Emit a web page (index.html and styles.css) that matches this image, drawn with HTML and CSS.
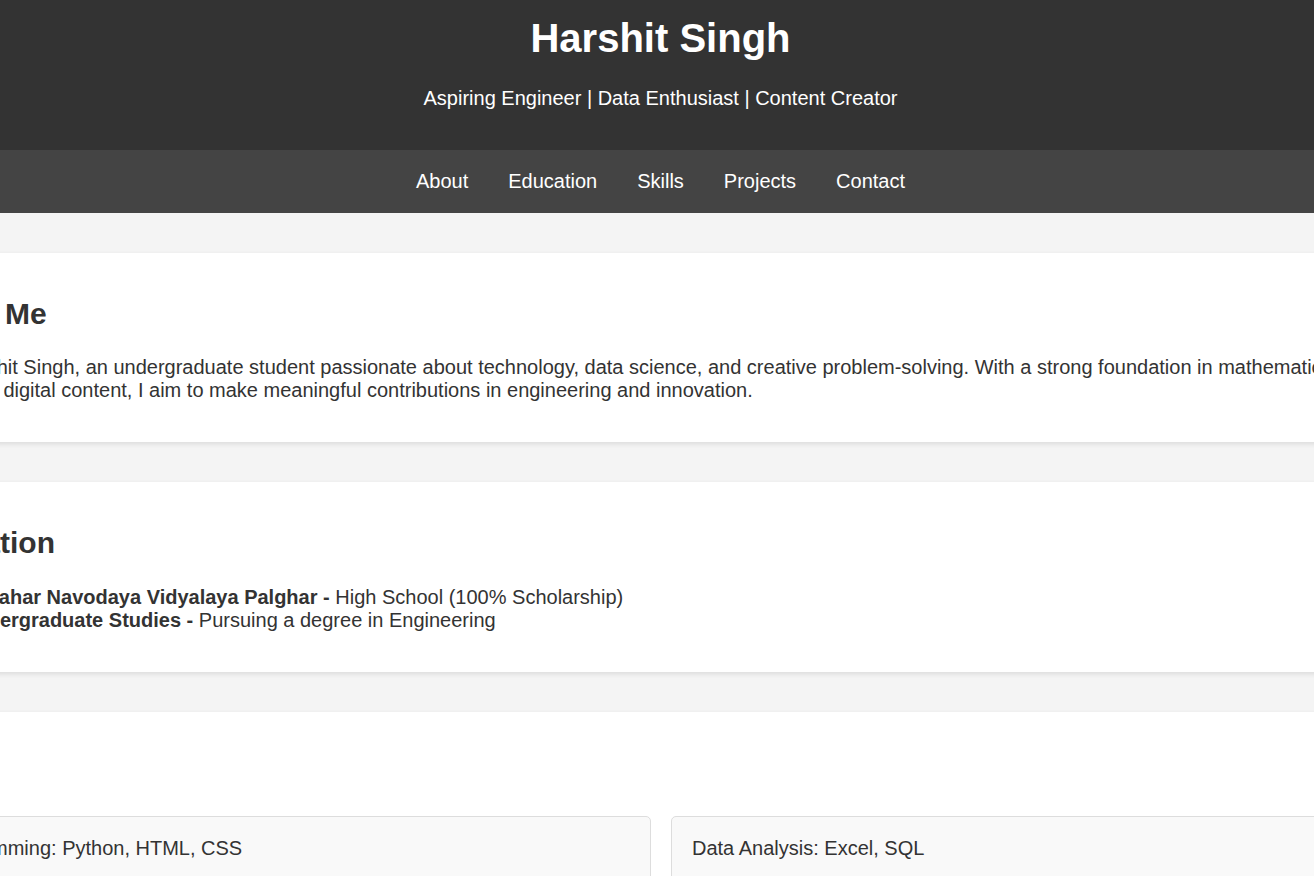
FILE: index.html
```html
<!DOCTYPE html>
<html lang="en">
<head>
<meta charset="utf-8">
<title>Harshit Singh</title>
<link rel="stylesheet" href="styles.css">
</head>
<body>
<header class="hero">
  <h1 class="hero-title">Harshit Singh</h1>
  <p class="hero-sub">Aspiring Engineer | Data Enthusiast | Content Creator</p>
</header>
<nav class="nav">
  <a class="nav-link" href="#about">About</a>
  <a class="nav-link" href="#education">Education</a>
  <a class="nav-link" href="#skills">Skills</a>
  <a class="nav-link" href="#projects">Projects</a>
  <a class="nav-link" href="#contact">Contact</a>
</nav>
<main class="main">
  <section class="card" id="about">
    <h2 class="card-title">About Me</h2>
    <p class="card-text">I am Harshit Singh, an undergraduate student passionate about technology, data science, and creative problem-solving. With a strong foundation in mathematics and producing digital content, I aim to make meaningful contributions in engineering and innovation.</p>
  </section>
  <section class="card" id="education">
    <h2 class="card-title">Education</h2>
    <ul class="edu-list">
      <li><strong>Jawahar Navodaya Vidyalaya Palghar -</strong> High School (100% Scholarship)</li>
      <li><strong>Undergraduate Studies -</strong> Pursuing a degree in Engineering</li>
    </ul>
  </section>
  <section class="card" id="skills">
    <h2 class="card-title">Skills</h2>
    <div class="skills">
      <div class="skill">Programming: Python, HTML, CSS</div>
      <div class="skill">Data Analysis: Excel, SQL</div>
      <div class="skill">Content Creation: Video Editing, Writing</div>
      <div class="skill">Tools: Git, VS Code</div>
    </div>
  </section>
  <section class="card" id="projects">
    <h2 class="card-title">Projects</h2>
    <p class="card-text">Coming soon.</p>
  </section>
  <section class="card" id="contact">
    <h2 class="card-title">Contact</h2>
    <p class="card-text">Email: harshit@example.com</p>
  </section>
</main>
</body>
</html>
```
FILE: styles.css
```css
html {
  scrollbar-width: none;
}
html::-webkit-scrollbar,
body::-webkit-scrollbar {
  display: none;
}
body {
  margin: 0;
  font-family: "Liberation Sans", Arial, sans-serif;
  background: #f4f4f4;
  color: #333;
  overflow-x: hidden;
}
.hero {
  background: #333;
  color: #fff;
  text-align: center;
  padding: 15px 0 40px 7px;
}
.hero-title {
  margin: 0;
  font-size: 40px;
  line-height: 46px;
  font-weight: bold;
}
.hero-sub {
  margin: 26px 0 0;
  font-size: 20px;
  line-height: 23px;
}
.nav {
  background: #444;
  display: flex;
  justify-content: center;
  gap: 40px;
  padding: 20px 0 20px 7px;
}
.nav-link {
  color: #fff;
  text-decoration: none;
  font-size: 20px;
  line-height: 23px;
}
.main {
  display: flex;
  flex-direction: column;
  align-items: center;
  gap: 40px;
  padding: 40px 0 40px 8px;
}
.card {
  flex: none;
  width: 1502px;
  padding: 20px;
  background: #fff;
  border-radius: 5px;
  box-shadow: 0 2px 5px rgba(0, 0, 0, 0.1);
}
.card-title {
  margin: 24px 0 0;
  font-size: 30px;
  line-height: 34px;
  font-weight: bold;
  color: #333;
}
.card-text {
  margin: 25px 0 20px;
  font-size: 20px;
  line-height: 23px;
}
.edu-list {
  margin: 26px 0 20px;
  padding-left: 51px;
  font-size: 20px;
  line-height: 23px;
}
.skills {
  display: grid;
  grid-template-columns: 1fr 1fr;
  gap: 20px;
  margin: 26px 0 21px;
}
.skill {
  background: #f9f9f9;
  border: 1px solid #ddd;
  border-radius: 5px;
  padding: 20px;
  font-size: 20px;
  line-height: 23px;
}
```
